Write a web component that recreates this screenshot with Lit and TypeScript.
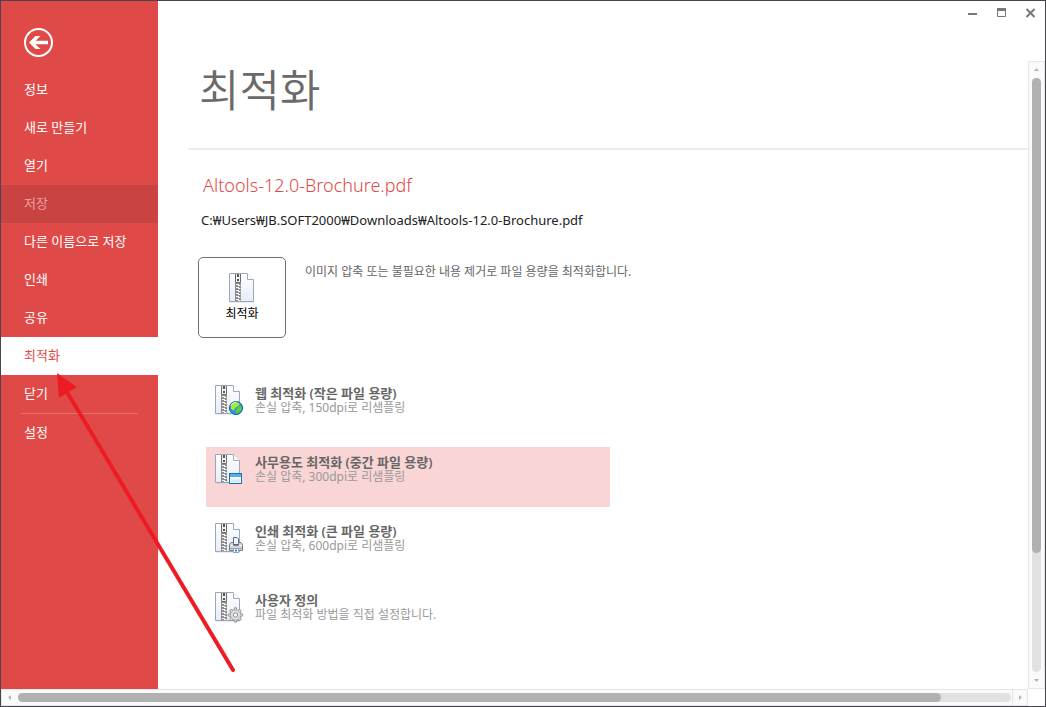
import { LitElement, html, css, svg, nothing } from "lit";
import { customElement, property } from "lit/decorators.js";

type Badge = "none" | "globe" | "window" | "printer" | "gear";

const teeth = [0, 45, 90, 135, 180, 225, 270, 315];

const badges = {
  none: nothing,
  globe: svg`
    <circle cx="22" cy="24" r="6.6" fill="#2a96e2" stroke="#1268b4" />
    <path d="M16.800 21.500Q18.500 18.200 22 18L25.500 19.400 24.500 22 21.500 23.500 19.600 26.500 17 24.800Z" fill="#a9ee22" />
    <path d="M22.500 25L26 21.800 28 23.800 26 28 22.800 29.600 21.400 27.500Z" fill="#5fd02a" />
    <path d="M17 21.200Q19 18 22.500 17.900" fill="none" stroke="#d8f6ff" />`,
  window: svg`
    <rect x="15.500" y="20.500" width="12" height="10" fill="#f2f7fb" stroke="#1b72b0" />
    <path d="M16 22.500H27" stroke="#54b0ee" stroke-width="3" />
    <path d="M16 24.500H27" stroke="#ffffff" />
    <path d="M17 28H26" stroke="#dbe6ee" stroke-width="3" />`,
  printer: svg`
    <path d="M19.500 22.500V15.500H23L24.500 17V22.500Z" fill="#eef4ff" stroke="#56698a" />
    <path d="M15.500 22.500L17 20.500H19.500V23.500H24.500V20.500H27L28.500 22.500V28.500H15.500Z" fill="#d6d6d6" stroke="#77797d" />
    <path d="M16 23.500H19M25 23.500H28" stroke="#f5f5f5" />
    <path d="M16 26.500H28" stroke="#a0a2a6" />
    <rect x="19.500" y="26.500" width="5" height="4" fill="#fff" stroke="#8fa8c8" />
    <path d="M21 28.500H23" stroke="#2f7de0" stroke-width="2" />`,
  gear: svg`
    ${teeth.map((a) => svg`<path d="M19.800 19.500L20.600 16.800H22.400L23.200 19.500" fill="#e2e2e2" stroke="#88898b" stroke-width="0.9" transform=${`rotate(${a} 21.5 24)`} />`)}
    <circle cx="21.5" cy="24" r="5" fill="#e2e2e2" stroke="#98999b" stroke-width="0.6" />
    <circle cx="21.5" cy="24" r="2.2" fill="#fafafa" stroke="#808184" stroke-width="0.9" />`,
};

const links = [12, 15, 18, 21, 24, 27];

@customElement("archive-icon")
export class ArchiveIcon extends LitElement {
  @property() badge: Badge = "none";

  static styles = css`
    :host { display: block; }
    .icon { display: block; width: 30px; height: 32px; }
  `;

  render() {
    return html`<svg class="icon" viewBox="0 0 30 32" aria-hidden="true">
      <defs>
        <linearGradient id="sheet" x1="0" y1="0" x2="0" y2="1">
          <stop offset="0" stop-color="#ffffff" />
          <stop offset="1" stop-color="#e6ecf8" />
        </linearGradient>
      </defs>
      <path d="M2 30.500H26" stroke="#c9ced6" opacity="0.4" />
      <path d="M1.500 1.500H19L25.500 8V29.500H1.500Z" fill="url(#sheet)" stroke="#9aa8ba" />
      <path d="M19.500 1.500V7.500H25.500" fill="#fff" stroke="#9aa8ba" />
      <path d="M7.500 2V10.500H12.500V2" fill="#f2f2f2" stroke="#6a6a6a" />
      <path d="M10 2V5M10 7V9" stroke="#555" stroke-width="2" />
      <path d="M7 11H13V29H7Z" fill="#8c8c8c" />
      ${links.map((y) => svg`<path d=${`M8 ${y}.5H11M10 ${y + 1}.5H12.500`} stroke="#f4f4f4" />`)}
      ${badges[this.badge]}
    </svg>`;
  }
}

@customElement("scroll-rail")
export class ScrollRail extends LitElement {
  @property({ reflect: true }) direction: "vertical" | "horizontal" = "vertical";
  @property({ type: Number }) extent = 50;

  static styles = css`
    :host { display: flex; box-sizing: border-box; background: #fafafa; border: 1px solid #e6e6e6; }
    :host([direction="vertical"]) { flex-direction: column; width: 17px; }
    :host([direction="horizontal"]) { height: 17px; }
    .step { display: grid; place-items: center; flex: none; width: 15px; height: 15px; margin: 0; padding: 0; border: 0; background: none; }
    .glyph { display: block; width: 5px; height: 5px; fill: #b5b5b5; }
    .track { flex: 1; border-radius: 5px; background: #e1e1e1; }
    .thumb { border-radius: 5px; background: #b1b1b1; }
    :host([direction="vertical"]) .track { margin: 1px 3px; }
    :host([direction="horizontal"]) .track { margin: 3px 1px; }
    :host([direction="horizontal"]) .thumb { height: 100%; }
    :host([direction="horizontal"]) .step:last-child { border-left: 1px solid #e6e6e6; }
  `;

  render() {
    const vertical = this.direction === "vertical";
    const size = vertical ? `height:${this.extent}%` : `width:${this.extent}%`;
    return html`
      <button class="step" aria-label=${vertical ? "위로" : "왼쪽으로"}>
        <svg class="glyph" viewBox="0 0 5 5"><path d=${vertical ? "M0 4L2.500 1L5 4Z" : "M4 0L1 2.500L4 5Z"} /></svg>
      </button>
      <div class="track"><div class="thumb" style=${size}></div></div>
      <button class="step" aria-label=${vertical ? "아래로" : "오른쪽으로"}>
        <svg class="glyph" viewBox="0 0 5 5"><path d=${vertical ? "M0 1L2.500 4L5 1Z" : "M1 0L4 2.500L1 5Z"} /></svg>
      </button>`;
  }
}

interface Preset { badge: Badge; title: string; note: string; selected?: boolean }

const presets: Preset[] = [
  { badge: "globe", title: "웹 최적화 (작은 파일 용량)", note: "손실 압축, 150dpi로 리샘플링" },
  { badge: "window", title: "사무용도 최적화 (중간 파일 용량)", note: "손실 압축, 300dpi로 리샘플링", selected: true },
  { badge: "printer", title: "인쇄 최적화 (큰 파일 용량)", note: "손실 압축, 600dpi로 리샘플링" },
  { badge: "gear", title: "사용자 정의", note: "파일 최적화 방법을 직접 설정합니다." },
];

const menu = ["정보", "새로 만들기", "열기", "저장", "다른 이름으로 저장", "인쇄", "공유", "최적화", "닫기"];

@customElement("app-root")
export class AppRoot extends LitElement {
  static styles = css`
    :host {
      position: relative;
      display: grid;
      grid-template: minmax(0, 1fr) auto / 157px minmax(0, 1fr) 17px;
      box-sizing: border-box;
      height: 100vh;
      border: 1px solid #47464c;
      background: #fff;
      color: #666;
      font-family: "Noto Sans", "Noto Sans CJK KR", sans-serif;
      font-size: 13px;
      line-height: 20px;
    }
    button { font: inherit; color: inherit; text-align: left; }
    .side { background: #df4a48; color: #fff; padding-top: 27px; }
    .back { display: block; width: 30px; height: 30px; margin: 0 0 13px 23px; padding: 0; border: 0; background: none; }
    .back svg { display: block; }
    .item { display: block; box-sizing: border-box; width: 100%; height: 38px; padding: 0 23px 2px; border: 0; background: none; }
    .item.disabled { background: #c84341; color: #eba2a1; }
    .item.current { background: #fff; color: #df4a48; }
    .divider { height: 1px; margin: 0 20px; border: 0; background: #e96f6d; }
    .main { display: flex; flex-direction: column; min-width: 0; padding-left: 30px; }
    .heading { margin: 0; padding: 57px 0 26px 11px; border-bottom: 2px solid #ececec; font-size: 44px; line-height: 64px; font-weight: 350; color: #6a6a6a; }
    .body { padding: 23px 10px 0; }
    .file { margin: 0 0 13px 5px; font-size: 18px; line-height: 24px; font-weight: 300; color: #df4a48; }
    .path { margin: 0 0 27px 3px; color: #222; }
    .action { display: flex; align-items: flex-start; gap: 19px; margin-bottom: 40px; }
    .optimize { display: flex; flex-direction: column; align-items: center; box-sizing: border-box; width: 88px; height: 81px; padding: 14px 0 0; border: 1px solid #707070; border-radius: 5px; background: #fff; color: #000; font-size: 12px; }
    .optimize archive-icon { margin-left: 2px; }
    .hint { margin: 5px 0 0; font-size: 12px; }
    .presets { display: flex; flex-direction: column; gap: 9px; max-width: 404px; margin-left: 8px; }
    .preset { display: flex; gap: 11px; box-sizing: border-box; height: 60px; padding: 6px 8px; border: 0; background: none; }
    .preset.selected { background: #f9d5d5; }
    .text { display: flex; flex-direction: column; gap: 1px; padding-top: 2px; line-height: 14px; }
    .title { font-weight: 600; }
    .note { font-size: 12px; color: #999; }
    .controls { position: absolute; top: 5px; right: 7px; display: flex; gap: 15px; }
    .control { width: 14px; height: 14px; padding: 0; border: 0; background: none; }
    .control svg { display: block; }
    .rail { margin-top: 60px; }
    .bottom { grid-column: 1 / 3; }
    .pointer { position: absolute; left: 54px; top: 371px; pointer-events: none; }
  `;

  render() {
    return html`
      <nav class="side">
        <button class="back" aria-label="뒤로">
          <svg width="30" height="30" viewBox="0 0 30 30" fill="none">
            <circle cx="14.500" cy="14.500" r="13.500" stroke="#fff" stroke-width="2" />
            <path d="M5 14.500L11.500 8H16.500L11.500 12.800H24V16.300H11.500L16.500 21H11.500Z" fill="#fff" />
          </svg>
        </button>
        ${menu.map((name) => html`<button
          class="item ${name === "저장" ? "disabled" : name === "최적화" ? "current" : ""}"
          ?disabled=${name === "저장"}>${name}</button>`)}
        <hr class="divider" />
        <button class="item">설정</button>
      </nav>
      <main class="main">
        <h1 class="heading">최적화</h1>
        <div class="body">
          <h2 class="file">Altools-12.0-Brochure.pdf</h2>
          <p class="path">C:₩Users₩JB.SOFT2000₩Downloads₩Altools-12.0-Brochure.pdf</p>
          <div class="action">
            <button class="optimize"><archive-icon></archive-icon>최적화</button>
            <p class="hint">이미지 압축 또는 불필요한 내용 제거로 파일 용량을 최적화합니다.</p>
          </div>
          <div class="presets">
            ${presets.map((p) => html`<button class="preset ${p.selected ? "selected" : ""}">
              <archive-icon .badge=${p.badge}></archive-icon>
              <span class="text"><span class="title">${p.title}</span><span class="note">${p.note}</span></span>
            </button>`)}
          </div>
        </div>
      </main>
      <scroll-rail class="rail" direction="vertical" .extent=${80}></scroll-rail>
      <scroll-rail class="bottom" direction="horizontal" .extent=${93}></scroll-rail>
      <div class="controls">
        <button class="control" aria-label="최소화"><svg width="14" height="14"><path d="M2 8H11" stroke="#77777b" stroke-width="2" /></svg></button>
        <button class="control" aria-label="최대화"><svg width="14" height="14" fill="none" stroke="#77777b"><path d="M2.500 3V10.500H10.500V3" /><path d="M2 3.500H11" stroke-width="3" /></svg></button>
        <button class="control" aria-label="창 닫기"><svg width="14" height="14"><path d="M2.500 3L10.500 11M10.500 3L2.500 11" stroke="#77777b" stroke-width="2" /></svg></button>
      </div>
      <svg class="pointer" width="184" height="302" viewBox="0 0 184 302" aria-hidden="true">
        <path d="M12 20L178 298" stroke="#ed1c24" stroke-width="4" stroke-linecap="round" />
        <path d="M2 1L22 15L4 26Z" fill="#ed1c24" />
      </svg>`;
  }
}
